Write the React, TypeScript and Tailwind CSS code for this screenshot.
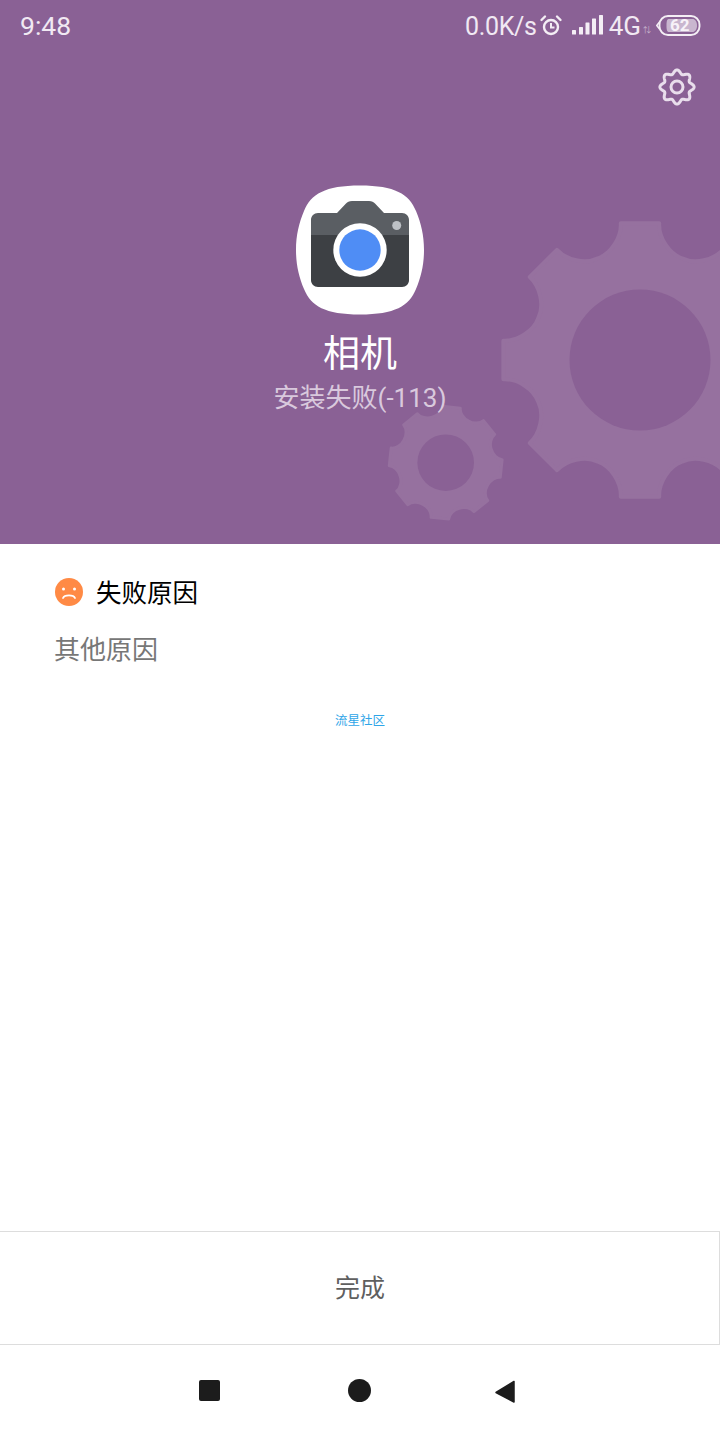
const FONT = "font-['Roboto','Noto_Sans_CJK_SC',sans-serif]";

function gearPath(cx: number, cy: number, R: number, valley: number, halfDeg: number, rotDeg: number) {
  const polar = (deg: number, r: number): [number, number] => {
    const t = ((deg - 90) * Math.PI) / 180;
    return [cx + r * Math.cos(t), cy + r * Math.sin(t)];
  };
  const f = (p: [number, number]) => `${p[0].toFixed(2)} ${p[1].toFixed(2)}`;
  const gapDeg = 22.5 - halfDeg;
  const depth = R - valley;
  let d = "";
  for (let i = 0; i < 8; i++) {
    const a = rotDeg + i * 45;
    const vDeg = a + 22.5;
    const outEnd = polar(a + halfDeg, R);
    const c1 = polar(a + halfDeg + gapDeg * 0.04, R - depth * 0.5);
    const c2 = polar(vDeg - gapDeg * 0.5, valley);
    const v = polar(vDeg, valley);
    const c3 = polar(vDeg + gapDeg * 0.5, valley);
    const c4 = polar(a + 45 - halfDeg - gapDeg * 0.04, R - depth * 0.5);
    const next = polar(a + 45 - halfDeg, R);
    d += `${i === 0 ? "M" : "L"}${f(polar(a - halfDeg, R))} L${f(outEnd)} C${f(c1)} ${f(c2)} ${f(v)} C${f(c3)} ${f(c4)} ${f(next)} `;
  }
  return d + "Z";
}

function wavyRing(cx: number, cy: number, mean: number, amp: number) {
  let d = "";
  for (let i = 0; i < 240; i++) {
    const t = (i / 240) * Math.PI * 2;
    const r = mean + amp * Math.cos(8 * t);
    d += `${i === 0 ? "M" : "L"}${(cx + r * Math.sin(t)).toFixed(2)} ${(cy - r * Math.cos(t)).toFixed(2)} `;
  }
  return d + "Z";
}

function HeroGears() {
  return (
    <svg className="absolute left-0 top-0" width="720" height="544" viewBox="0 0 720 544">
      <path d={gearPath(640, 360, 138, 110, 8, 0)} fill="#96719f" stroke="#96719f" strokeWidth="4" strokeLinejoin="round" />
      <circle cx="640" cy="360" r="70.5" fill="#8a6195" />
      <path d={gearPath(445.7, 462.7, 56.5, 47.5, 9, 6)} fill="#96719f" stroke="#96719f" strokeWidth="3" strokeLinejoin="round" />
      <circle cx="445.7" cy="462.7" r="28.3" fill="#8a6195" />
    </svg>
  );
}

function SettingsGear() {
  return (
    <svg width="40" height="40" viewBox="0 0 40 40" fill="none" stroke="#e9deec" strokeWidth="3">
      <path d={wavyRing(20, 20, 15.2, 1.9)} strokeLinejoin="round" />
      <circle cx="20" cy="20" r="6" />
    </svg>
  );
}

function CameraIcon() {
  return (
    <svg width="130" height="130" viewBox="0 0 130 130">
      <path d="M65 0.500C100 0.500 114 9 121 26C126 38 129 50 129 65C129 80 126 92 121 104C114 121 100 129.500 65 129.500C30 129.500 16 121 9 104C4 92 1 80 1 65C1 50 4 38 9 26C16 9 30 0.500 65 0.500Z" fill="#ffffff" />
      <path d="M23 28H42L51 18.500C52.500 17 54 16 57 16H74C77 16 78.500 17 80 18.500L89 28H107C111 28 114 31 114 35V50H16V35C16 31 19 28 23 28Z" fill="#5a5e63" />
      <path d="M16 50H114V95C114 99 111 102 107 102H23C19 102 16 99 16 95Z" fill="#3d4044" />
      <circle cx="65" cy="65" r="26.700" fill="#ffffff" />
      <circle cx="65" cy="65" r="20.700" fill="#4f8df5" />
      <circle cx="101.700" cy="40.500" r="4.500" fill="#bdc1c6" />
    </svg>
  );
}

function AlarmIcon() {
  return (
    <svg width="24" height="24" viewBox="0 0 24 24" fill="none" stroke="#f4eef5" strokeWidth="2.400">
      <circle cx="12" cy="14" r="7" />
      <path d="M12 10V14.500H15.500" strokeWidth="2" />
      <path d="M2.500 7L6 3.500M21.500 7L18 3.500" strokeLinecap="round" />
    </svg>
  );
}

function SignalIcon() {
  return (
    <svg width="32" height="20" viewBox="0 0 32 20" fill="#f4eef5">
      <rect x="0" y="15" width="4" height="4.500" rx="0.500" />
      <rect x="7" y="12" width="4" height="7.500" rx="0.500" />
      <rect x="13.500" y="7.500" width="4" height="12" rx="0.500" />
      <rect x="20" y="3.500" width="4" height="16" rx="0.500" />
      <rect x="27" y="0" width="4" height="19.500" rx="0.500" />
    </svg>
  );
}

function Battery() {
  return (
    <div className="relative flex h-[21px] w-[45px] items-center">
      <svg className="absolute left-0 top-0" width="45" height="21" viewBox="0 0 45 21">
        <path d="M3.500 7L0.800 10.500L3.500 14" stroke="#f4eef5" strokeWidth="1.500" fill="none" />
        <rect x="3.500" y="1" width="40" height="19" rx="8.500" fill="none" stroke="#f4eef5" strokeWidth="1.900" />
        <path d="M13 4H36.500C39 4 41 6.500 41 10.500C41 14.500 39 17 36.500 17H13C11 17 10.500 15 10.500 10.500C10.500 6 11 4 13 4Z" fill="#c9b6cf" />
      </svg>
      <span className="relative ml-[14px] text-[17px] font-bold leading-none text-[#f7f2f8]">62</span>
    </div>
  );
}

function StatusBar() {
  return (
    <div className="relative flex h-[52px] items-center justify-between pl-[20px] pr-[19px] leading-none text-[#f1e9f3]">
      <span className="text-[26.500px]">9:48</span>
      <div className="flex items-center">
        <span className="text-[25px] tracking-[-0.3px]">0.0K/s</span>
        <span className="ml-[2px] -mt-[2px]"><AlarmIcon /></span>
        <span className="ml-[9px] -mt-[2px]"><SignalIcon /></span>
        <span className="ml-[5px] text-[26px]">4G</span>
        <span className="ml-[2px] mt-[10px] text-[8px] leading-none text-[#c9b5ce]">⇅</span>
        <span className="ml-[5px] -mt-[2px]"><Battery /></span>
      </div>
    </div>
  );
}

function SadFace() {
  return (
    <svg width="28" height="28" viewBox="0 0 28 28">
      <circle cx="14" cy="14" r="14" fill="#ff8a45" />
      <circle cx="8.500" cy="11" r="1.500" fill="#ffffff" />
      <circle cx="19.500" cy="11" r="1.500" fill="#ffffff" />
      <path d="M8 20C9.500 16.500 18.500 16.500 20 20" fill="none" stroke="#ffffff" strokeWidth="1.800" strokeLinecap="round" />
    </svg>
  );
}

function NavBar() {
  return (
    <div className="flex h-[95px] items-start pl-[199px] pt-[35px]">
      <div className="h-[21px] w-[21px] rounded-[2px] bg-[#1c1c1c]" />
      <div className="ml-[128px] h-[23px] w-[23px] -translate-y-[1px] rounded-full bg-[#1c1c1c]" />
      <svg className="ml-[123px]" width="22" height="24" viewBox="0 0 22 24">
        <path d="M20 1.500V22L2 12.500Z" fill="#1c1c1c" stroke="#1c1c1c" strokeWidth="1.500" strokeLinejoin="round" />
      </svg>
    </div>
  );
}

export default function App() {
  return (
    <div className={`flex h-[1440px] w-[720px] flex-col overflow-hidden bg-white ${FONT}`}>
      <div className="relative h-[544px] overflow-hidden bg-[#8a6195]">
        <HeroGears />
        <StatusBar />
        <div className="relative flex justify-end pr-[23px] pt-[15px]">
          <SettingsGear />
        </div>
        <div className="relative mt-[78px] flex flex-col items-center">
          <CameraIcon />
          <div className="mt-[16px] text-[37px] leading-[48px] text-white">相机</div>
          <div className="mt-[1px] text-[26px] leading-[36px] text-[#d9c9dd]">安装失败(-113)</div>
        </div>
      </div>

      <div className="flex-1 pl-[55px]">
        <div className="mt-[32px] flex h-[32px] items-center">
          <SadFace />
          <span className="ml-[13px] mt-[4px] text-[25.500px] leading-none text-black">失败原因</span>
        </div>
        <div className="mt-[26px] -ml-[1px] text-[26px] leading-[32px] text-[#777777]">其他原因</div>
        <div className="mt-[47px] -ml-[55px] text-center text-[12.500px] leading-[16px] text-[#2ea5e8]">流星社区</div>
      </div>

      <div className="flex h-[114px] items-center justify-center border-y border-r border-[#dddddd] pl-[1px] pt-[2px] text-[25px] text-[#5f5f5f]">
        完成
      </div>
      <NavBar />
    </div>
  );
}
